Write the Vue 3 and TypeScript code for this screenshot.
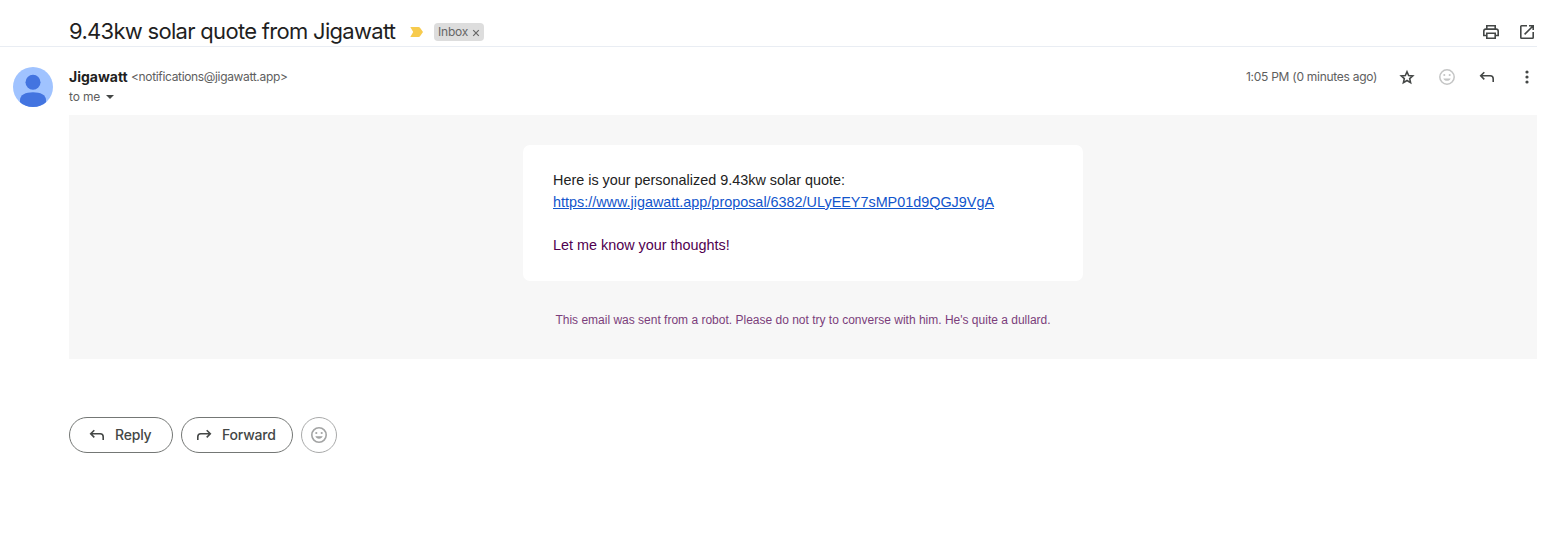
<script setup lang="ts">
interface Mail {
  subject: string
  sender: string
  address: string
  time: string
  link: string
}

const mail: Mail = {
  subject: '9.43kw solar quote from Jigawatt',
  sender: 'Jigawatt',
  address: '<notifications@jigawatt.app>',
  time: '1:05 PM (0 minutes ago)',
  link: 'https://www.jigawatt.app/proposal/6382/ULyEEY7sMP01d9QGJ9VgA',
}
</script>

<template>
  <main class="mail">
    <header class="subject-bar">
      <h1 class="subject">{{ mail.subject }}</h1>
      <svg class="marker" width="14" height="10" viewBox="0 0 14 10"><path d="M.3 0h8.200c.8 0 1.300.3 1.700.9L13 5l-2.800 4.100c-.4.6-.9.9-1.700.9H.3L3.200 5z" fill="#f7cb4d" /></svg>
      <span class="label"><span class="label-text">Inbox</span><svg width="8" height="8" viewBox="0 0 8 8"><path d="M1.200 1.200l5.600 5.600M6.800 1.200L1.200 6.800" stroke="#666" stroke-width="1.200" /></svg></span>
      <div class="tools">
        <svg width="20" height="20" viewBox="0 0 20 20"><g fill="none" stroke="#444746" stroke-width="1.600"><path d="M5.800 6.500V3.800h8.400v2.700M5.800 13.500h-3V9.300c0-1.300.8-2.200 2.100-2.200h10.200c1.300 0 2.100.9 2.100 2.200v4.200h-3" /><path d="M5.800 11.300h8.400v4.900H5.800z" /></g></svg>
        <svg width="20" height="20" viewBox="0 0 20 20"><g fill="none" stroke="#444746" stroke-width="1.600"><path d="M10 3.800H4.500c-.4 0-.7.3-.7.700v11c0 .4.300.7.700.7h11c.4 0 .7-.3.700-.7V10M12 3.800h4.200V8M16 4l-8.400 8.400" /></g></svg>
      </div>
    </header>

    <section class="message">
      <svg class="avatar" width="40" height="40" viewBox="0 0 40 40">
        <clipPath id="avatar-clip"><circle cx="20" cy="20" r="20" /></clipPath>
        <circle cx="20" cy="20" r="20" fill="#a0c3ff" />
        <g clip-path="url(#avatar-clip)" fill="#4374e0">
          <circle cx="20" cy="15.300" r="7.500" />
          <path d="M7 40v-7c0-5 5.500-7.700 13-7.700S33 28 33 33v7z" />
        </g>
      </svg>
      <div class="content">
        <div class="meta">
          <div class="from">
            <div class="from-line"><strong class="sender">{{ mail.sender }}</strong><span class="address">{{ mail.address }}</span></div>
            <div class="to-line"><span class="to">to me</span><svg class="caret" width="8" height="4" viewBox="0 0 8 4"><path d="M0 0h8L4 4z" fill="#444746" /></svg></div>
          </div>
          <div class="actions">
            <span class="time">{{ mail.time }}</span>
            <svg width="20" height="20" viewBox="0 0 20 20"><path d="M10 4.700l1.650 3.750 4.100.4-3.080 2.720.9 4.030L10 13.500l-3.570 2.100.9-4.030L4.250 8.850l4.100-.4z" fill="none" stroke="#444746" stroke-width="1.600" /></svg>
            <svg width="20" height="20" viewBox="0 0 20 20"><circle cx="10" cy="10" r="7.200" fill="none" stroke="#c4c5c5" stroke-width="1.500" /><g fill="#c4c5c5"><circle cx="7.300" cy="8" r="1.050" /><circle cx="12.700" cy="8" r="1.050" /><path d="M6.300 11.500h7.400c-.6 1.500-1.900 2.300-3.700 2.300s-3.100-.8-3.700-2.300z" /></g></svg>
            <svg width="20" height="20" viewBox="0 0 20 20"><path d="M7.300 5.200L3.700 8.800l3.600 3.600M4 8.800h9.200c1.900 0 3 1.100 3 3v3.300" fill="none" stroke="#444746" stroke-width="1.600" /></svg>
            <svg width="20" height="20" viewBox="0 0 20 20"><g fill="#444746"><circle cx="10" cy="5" r="1.600" /><circle cx="10" cy="10" r="1.600" /><circle cx="10" cy="15" r="1.600" /></g></svg>
          </div>
        </div>

        <article class="body">
          <div class="card">
            <div class="intro">Here is your personalized 9.43kw solar quote:</div>
            <div><a class="link">{{ mail.link }}</a></div>
            <div class="closing">Let me know your thoughts!</div>
          </div>
          <p class="robot">This email was sent from a robot. Please do not try to converse with him. He's quite a dullard.</p>
        </article>

        <div class="buttons">
          <button class="btn reply">
            <svg width="20" height="20" viewBox="0 0 20 20"><path d="M7.300 5.200L3.700 8.800l3.600 3.600M4 8.800h9.200c1.900 0 3 1.100 3 3v3.300" fill="none" stroke="#444746" stroke-width="1.600" /></svg>
            <span class="btn-text">Reply</span>
          </button>
          <button class="btn forward">
            <svg width="20" height="20" viewBox="0 0 20 20"><path d="M12.700 5.200l3.600 3.600-3.600 3.600M16 8.800H6.800c-1.900 0-3 1.100-3 3v3.300" fill="none" stroke="#444746" stroke-width="1.600" /></svg>
            <span class="btn-text">Forward</span>
          </button>
          <button class="btn emoji">
            <svg width="20" height="20" viewBox="0 0 20 20"><circle cx="10" cy="10" r="7.200" fill="none" stroke="#a3a4a4" stroke-width="1.600" /><g fill="#a3a4a4"><circle cx="7.300" cy="8" r="1.100" /><circle cx="12.700" cy="8" r="1.100" /><path d="M6.300 11.300h7.400c-.6 1.600-1.900 2.500-3.700 2.500s-3.100-.9-3.700-2.500z" /></g></svg>
          </button>
        </div>
      </div>
    </section>
  </main>
</template>

<style>
body {
  margin: 0;
  background: #fff;
}
</style>

<style scoped>
.mail {
  height: 534px;
  padding-right: 12px;
  box-sizing: border-box;
  overflow: hidden;
  background: #fff;
  font-family: Inter, Roboto, sans-serif;
  color: #1f1f1f;
}
svg {
  display: block;
  flex: none;
}
.subject-bar {
  display: flex;
  align-items: center;
  height: 47px;
  box-sizing: border-box;
  padding: 17px 0 0 69px;
  border-bottom: 1px solid #e9edf3;
}
.subject {
  width: 327px;
  margin: -2px 0 0;
  font-size: 22px;
  font-weight: 400;
  line-height: 28px;
  letter-spacing: -0.7px;
  white-space: nowrap;
}
.marker {
  margin: 1px 0 0 14px;
}
.label {
  display: flex;
  align-items: center;
  justify-content: space-between;
  width: 50px;
  height: 18px;
  margin: 1px 0 0 10px;
  padding: 0 4px;
  box-sizing: border-box;
  border-radius: 4px;
  background: #ddd;
  color: #666;
  font-size: 12px;
}
.label-text {
  margin-top: -2px;
  letter-spacing: -0.2px;
}
.label svg {
  margin-top: 2px;
}
.tools {
  display: flex;
  gap: 16px;
  margin: 1px 0 0 auto;
}
.message {
  display: flex;
  padding-left: 13px;
}
.avatar {
  margin: 20px 16px 0 0;
}
.content {
  flex: 1;
}
.meta {
  display: flex;
  justify-content: space-between;
  height: 68px;
  padding-top: 20px;
  box-sizing: border-box;
}
.from {
  margin-top: -1px;
}
.from-line,
.to-line {
  display: flex;
  align-items: center;
  height: 20px;
  font-size: 12px;
  color: #5e5e5e;
  white-space: nowrap;
}
.sender {
  width: 62px;
  font-size: 14px;
  font-weight: 700;
  color: #1f1f1f;
}
.address {
  letter-spacing: -0.34px;
}
.to {
  width: 37px;
  letter-spacing: -0.15px;
}
.caret {
  margin-top: 2px;
}
.actions {
  display: flex;
  gap: 20px;
  height: 20px;
}
.time {
  width: 131px;
  font-size: 12px;
  line-height: 20px;
  letter-spacing: -0.27px;
  color: #5e5e5e;
  white-space: nowrap;
}
.body {
  height: 244px;
  padding-top: 30px;
  box-sizing: border-box;
  background: #f7f7f7;
  font-family: "Liberation Sans", Arial, sans-serif;
}
.card {
  width: 560px;
  height: 136px;
  margin: 0 auto;
  padding: 25px 30px;
  box-sizing: border-box;
  border-radius: 7px;
  background: #fff;
  font-size: 14.400px;
  line-height: 21.600px;
  white-space: nowrap;
}
.intro {
  color: #222;
}
.link {
  color: #15c;
  text-decoration: underline;
}
.closing {
  margin-top: 21.600px;
  color: #500050;
}
.robot {
  margin: 30px 0 0;
  font-size: 12px;
  line-height: 18px;
  text-align: center;
  color: #7b3e7b;
}
.buttons {
  display: flex;
  gap: 8px;
  margin-top: 58px;
}
.btn {
  display: flex;
  align-items: center;
  height: 36px;
  padding: 0;
  box-sizing: border-box;
  border: 1px solid #747775;
  border-radius: 18px;
  background: #fff;
  color: #444746;
  font-family: inherit;
  font-size: 14px;
  font-weight: 500;
}
.reply {
  width: 104px;
  padding-left: 17px;
}
.forward {
  width: 112px;
  padding-left: 12px;
}
.btn-text {
  margin: -2px 0 0 8px;
  letter-spacing: -0.2px;
}
.emoji {
  width: 36px;
  justify-content: center;
  border-color: #a9aaaa;
}
</style>
